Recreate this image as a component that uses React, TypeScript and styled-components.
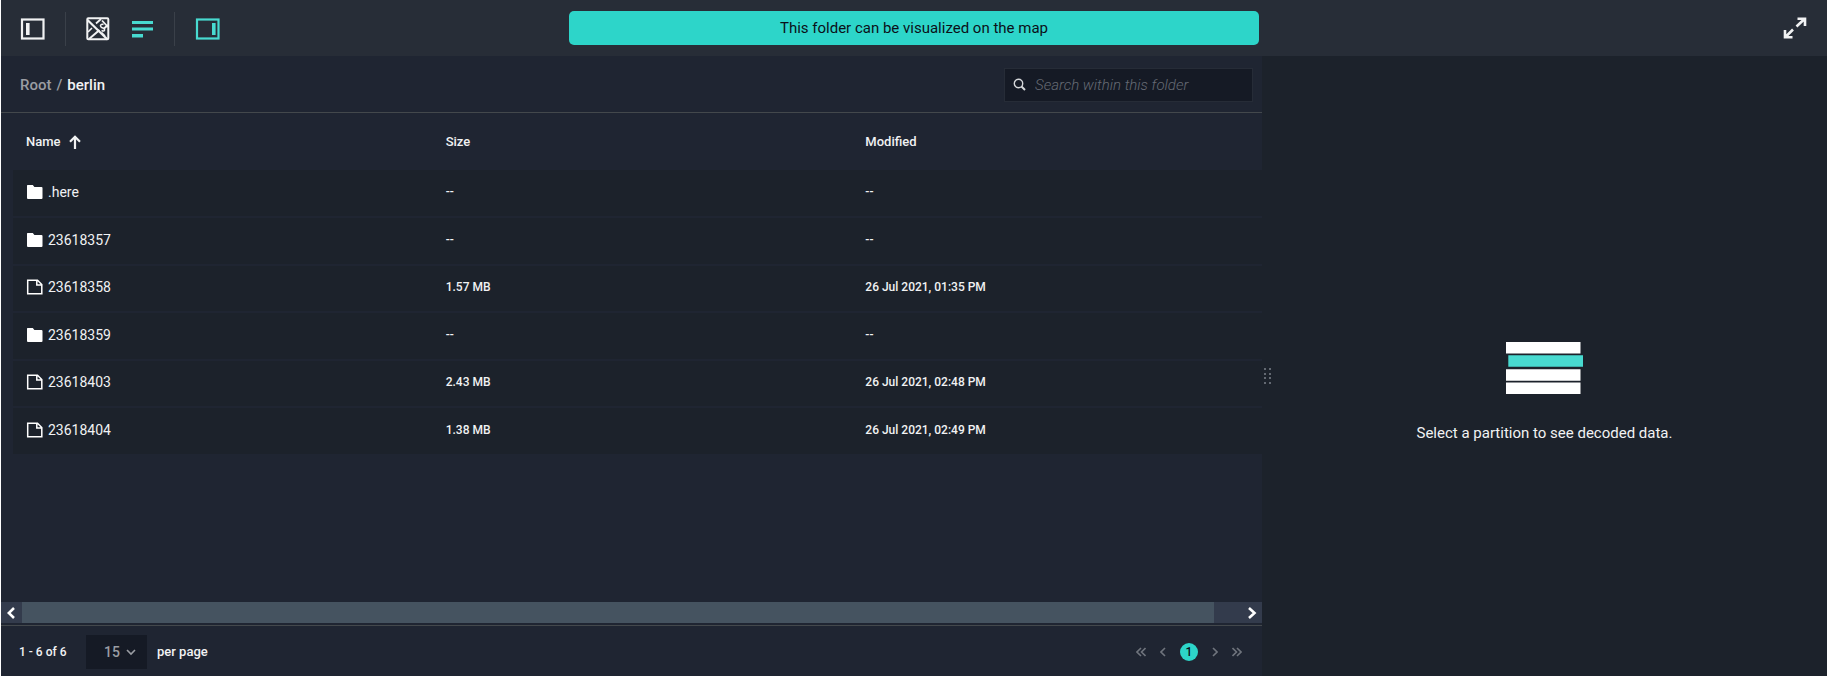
import React, { useState } from 'react';
import styled, { createGlobalStyle } from 'styled-components';

const color = {
  bar: '#272d37',
  panel: '#1f2532',
  surface: '#1c222b',
  field: '#151a25',
  line: '#43484c',
  track: '#333b4c',
  thumb: '#455360',
  accent: '#2dd5c9',
  accentIcon: '#48dad0',
  text: '#f1f2f3',
  muted: '#9a9da3',
  faint: '#6f747d',
};

const GlobalStyle = createGlobalStyle`
  * { box-sizing: border-box; }
  body {
    margin: 0;
    background: ${color.surface};
    color: ${color.text};
    font-family: Roboto, "Noto Sans", sans-serif;
    font-size: 14px;
    line-height: 20px;
  }
  button, input, select { font: inherit; color: inherit; }
`;

const Page = styled.div`
  display: flex;
  flex-direction: column;
  min-height: 100vh;
  border-left: 1px solid #fff;
`;

const Toolbar = styled.header`
  display: grid;
  grid-template-columns: minmax(0, 1fr) 565px;
  align-items: center;
  height: 56px;
  background: ${color.bar};
`;

const ToolbarMain = styled.div`
  display: flex;
  align-items: center;
  justify-content: space-between;
  padding: 0 3px 0 19px;
`;

const ToolbarSide = styled.div`
  display: flex;
  justify-content: flex-end;
  padding-right: 20px;
`;

const Tools = styled.div`
  display: flex;
  align-items: center;
  gap: 20px;
  padding-top: 1px;
`;

const IconButton = styled.button<{ $active?: boolean }>`
  display: flex;
  padding: 0;
  border: 0;
  background: none;
  cursor: pointer;
  color: ${(p) => (p.$active ? color.accentIcon : color.text)};
`;

const Divider = styled.span`
  width: 1px;
  height: 34px;
  background: #3a4049;
`;

const Banner = styled.button`
  width: 690px;
  height: 34px;
  border: 0;
  border-radius: 5px;
  background: ${color.accent};
  color: #0b1018;
  font-size: 15px;
  cursor: pointer;
`;

const Main = styled.main`
  flex: 1;
  display: grid;
  grid-template-columns: minmax(0, 1fr) 565px;
`;

const Browser = styled.section`
  display: flex;
  flex-direction: column;
  background: ${color.panel};
`;

const PathBar = styled.div`
  display: flex;
  align-items: center;
  justify-content: space-between;
  height: 57px;
  padding: 1px 9px 0 19px;
  border-bottom: 1px solid ${color.line};
`;

const Breadcrumb = styled.nav`
  display: flex;
  gap: 5px;
  font-size: 15px;
  font-weight: 500;
  color: ${color.muted};
`;

const Crumb = styled.a<{ $current?: boolean }>`
  color: ${(p) => (p.$current ? color.text : color.muted)};
  text-decoration: none;
`;

const SearchField = styled.label`
  display: flex;
  align-items: center;
  gap: 9px;
  width: 249px;
  height: 34px;
  padding: 0 8px;
  border: 1px solid #262c37;
  background: ${color.field};
`;

const SearchInput = styled.input`
  flex: 1;
  min-width: 0;
  padding: 0;
  border: 0;
  outline: 0;
  background: none;
  font-size: 15px;
  &::placeholder {
    color: #656a74;
    font-style: italic;
    font-weight: 300;
    opacity: 1;
  }
`;

const Listing = styled.div`
  flex: 1;
  padding-left: 12px;
`;

const Table = styled.table`
  width: 100%;
  table-layout: fixed;
  border-collapse: collapse;
`;

const HeadCell = styled.th`
  height: 57px;
  padding: 1px 0 0 13px;
  text-align: left;
  font-size: 13px;
  font-weight: 500;
  &:not(:last-child) { width: 33.6%; }
`;

const SortButton = styled.button`
  display: inline-flex;
  align-items: center;
  gap: 8px;
  padding: 0;
  border: 0;
  background: none;
  cursor: pointer;
`;

const Row = styled.tr`
  height: 47px;
  background: ${color.surface};
  border-bottom: 2px solid ${color.panel};
  &:nth-child(even) { height: 48px; }
`;

const Cell = styled.td`
  padding: 0 0 3px 13px;
  font-size: 12px;
  font-weight: 500;
`;

const FileLink = styled.a`
  display: flex;
  align-items: center;
  gap: 5px;
  color: inherit;
  text-decoration: none;
  font-size: 14px;
  font-weight: 400;
`;

const ScrollBar = styled.div`
  display: flex;
  height: 21px;
  margin-bottom: 2px;
  background: ${color.track};
`;

const ScrollTrack = styled.div`
  flex: 1;
`;

const ScrollThumb = styled.div`
  width: 97.8%;
  height: 21px;
  background: ${color.thumb};
`;

const ScrollButton = styled.button`
  display: flex;
  align-items: center;
  justify-content: center;
  width: 21px;
  padding: 0;
  border: 0;
  background: ${color.track};
  color: #fff;
`;

const Footer = styled.footer`
  display: flex;
  align-items: center;
  justify-content: space-between;
  height: 51px;
  padding: 2px 20px 0 18px;
  border-top: 1px solid ${color.line};
  font-size: 13px;
  font-weight: 500;
`;

const PageSize = styled.div`
  display: flex;
  align-items: center;
`;

const PageCount = styled.span`
  width: 67px;
  font-size: 12px;
`;

const PageSizeLabel = styled.label`
  margin-left: 10px;
`;

const SelectBox = styled.div`
  display: grid;
  align-items: center;
  width: 61px;
  height: 34px;
  background: ${color.field};
  color: ${color.muted};
  > * { grid-area: 1 / 1; }
  > svg { justify-self: end; margin-right: 11px; pointer-events: none; }
`;

const Select = styled.select`
  width: 100%;
  height: 34px;
  padding: 0 0 0 18px;
  border: 0;
  border-radius: 0;
  appearance: none;
  background: none;
  font-size: 14px;
`;

const Pager = styled.nav`
  display: flex;
  align-items: center;
  gap: 14px;
`;

const PagerButton = styled.button`
  display: flex;
  padding: 0;
  border: 0;
  background: none;
  color: ${color.faint};
`;

const CurrentPage = styled.button`
  width: 18px;
  height: 18px;
  padding: 0;
  border: 0;
  border-radius: 50%;
  background: ${color.accent};
  color: #0b1018;
  font-size: 12px;
  line-height: 18px;
`;

const Preview = styled.aside`
  display: flex;
  align-items: center;
  background: ${color.surface};
`;

const Handle = styled.div`
  display: flex;
  width: 12px;
  padding: 20px 0 0 2px;
  cursor: col-resize;
`;

const EmptyState = styled.div`
  flex: 1;
  display: flex;
  flex-direction: column;
  align-items: center;
  gap: 29px;
  padding: 53px 12px 0 0;
  font-size: 15px;
`;

type Kind = 'folder' | 'file';
interface Entry { name: string; kind: Kind; size: string; modified: string }

const entries: Entry[] = [
  { name: '.here', kind: 'folder', size: '--', modified: '--' },
  { name: '23618357', kind: 'folder', size: '--', modified: '--' },
  { name: '23618358', kind: 'file', size: '1.57 MB', modified: '26 Jul 2021, 01:35 PM' },
  { name: '23618359', kind: 'folder', size: '--', modified: '--' },
  { name: '23618403', kind: 'file', size: '2.43 MB', modified: '26 Jul 2021, 02:48 PM' },
  { name: '23618404', kind: 'file', size: '1.38 MB', modified: '26 Jul 2021, 02:49 PM' },
];

const PanelIcon = ({ side }: { side: 'left' | 'right' }) => (
  <svg width="25" height="22" viewBox="0 0 25 22" fill="none" aria-hidden="true">
    <rect x="2" y="1.5" width="21.5" height="19" stroke="currentColor" strokeWidth="2.2" />
    <rect x={side === 'left' ? 6 : 17} y="5" width="3.6" height="12" fill="currentColor" />
  </svg>
);

const MapIcon = () => (
  <svg width="24" height="24" viewBox="0 0 24 24" fill="none" stroke="currentColor" aria-hidden="true">
    <rect x="1.3" y="1.3" width="21" height="21" rx="1" strokeWidth="2" />
    <path d="M1.5 3 21.5 22.5" strokeWidth="2.2" />
    <path d="M3 22 13.5 13M18 11.5 22 8" strokeWidth="2" />
    <path d="M2 15 6 11M15.5 15.5 19 19" strokeWidth="1.6" />
    <path d="M10 6.5 15 2M16 3.5 22 10" strokeWidth="1.8" />
    <path d="M17.5 7.5C15.5 6.500 13.5 8.500 15 10S18 10.500 18.5 12.5 16.5 14 15.5 13.5" strokeWidth="1.5" />
  </svg>
);

const ListIcon = () => (
  <svg width="24" height="20" viewBox="0 0 24 20" fill="currentColor" aria-hidden="true">
    <path d="M2 2h21v3H2zM2 8.5h21v3H2zM2 15h11v3.5H2z" />
  </svg>
);

const ExpandIcon = () => (
  <svg width="24" height="22" viewBox="0 0 24 22" fill="none" stroke="currentColor" strokeWidth="2.6" aria-hidden="true">
    <path d="M14.5 1.8H22V9M21.5 2 13.5 9.5M9.5 20.2H2V13M2.5 20 10 12.5" />
  </svg>
);

const SearchIcon = () => (
  <svg width="13" height="13" viewBox="0 0 13 13" fill="none" stroke="#d5d7da" aria-hidden="true">
    <circle cx="5.5" cy="5.5" r="4.2" strokeWidth="1.4" />
    <path d="M8.5 8.5 12 12" strokeWidth="2" />
  </svg>
);

const SortIcon = () => (
  <svg width="12" height="14" viewBox="0 0 12 14" fill="none" stroke="currentColor" strokeWidth="2.2" aria-hidden="true">
    <path d="M6 14V1.8M1 6.8 6 1.8l5 5" />
  </svg>
);

const EntryIcon = ({ kind }: { kind: Kind }) => (
  <svg width="17" height="16" viewBox="0 0 17 16" aria-hidden="true">
    {kind === 'folder' ? (
      <path d="M1.5 1h5.3l1.6 2H15.5a1 1 0 0 1 1 1v10a1 1 0 0 1-1 1h-13.5a1 1 0 0 1-1-1V1.5z" fill="#fff" />
    ) : (
      <path d="M1.7 1.2H11.5L15.8 5.5V14.8H1.7zM10.8 1.5V6H15.5" fill="none" stroke="#fff" strokeWidth="1.5" />
    )}
  </svg>
);

const Chevron = ({ d, width, size = 10, stroke = 1.6 }: { d: string; width: number; size?: number; stroke?: number }) => (
  <svg width={width} height={size} viewBox={`0 0 ${width} ${size}`} fill="none" stroke="currentColor" strokeWidth={stroke} aria-hidden="true">
    <path d={d} />
  </svg>
);

const HandleDots = () => (
  <svg width="8" height="17" viewBox="0 0 8 17" fill="#636972" aria-hidden="true">
    {[0, 5, 9, 14].map((y) => (
      <path key={y} d={`M0 ${y}h2v2h-2zM5 ${y}h2v2h-2z`} />
    ))}
  </svg>
);

const PartitionArt = () => (
  <svg width="77" height="52" viewBox="0 0 77 52" fill="#fff" aria-hidden="true">
    <path d="M0 0h74.5v11.5H0zM0 27.2h74.5v11.5H0zM0 40.5h74.5v11.5H0z" />
    <path d="M2.3 13.3H77v11.5H2.3z" fill={color.accentIcon} />
  </svg>
);

export default function App() {
  const [query, setQuery] = useState('');
  const [pageSize, setPageSize] = useState('15');
  return (
    <Page>
      <GlobalStyle />
      <Toolbar>
        <ToolbarMain>
          <Tools>
            <IconButton aria-label="Toggle left panel"><PanelIcon side="left" /></IconButton>
            <Divider />
            <IconButton aria-label="Map view"><MapIcon /></IconButton>
            <IconButton aria-label="List view" $active><ListIcon /></IconButton>
            <Divider />
            <IconButton aria-label="Toggle right panel" $active><PanelIcon side="right" /></IconButton>
          </Tools>
          <Banner>This folder can be visualized on the map</Banner>
        </ToolbarMain>
        <ToolbarSide>
          <IconButton aria-label="Full screen"><ExpandIcon /></IconButton>
        </ToolbarSide>
      </Toolbar>
      <Main>
        <Browser>
          <PathBar>
            <Breadcrumb aria-label="Breadcrumb">
              <Crumb href="#root">Root</Crumb>
              <span>/</span>
              <Crumb href="#berlin" $current>berlin</Crumb>
            </Breadcrumb>
            <SearchField>
              <SearchIcon />
              <SearchInput
                aria-label="Search within this folder"
                placeholder="Search within this folder"
                value={query}
                onChange={(e) => setQuery(e.target.value)}
              />
            </SearchField>
          </PathBar>
          <Listing>
            <Table>
              <thead>
                <tr>
                  <HeadCell><SortButton>Name <SortIcon /></SortButton></HeadCell>
                  <HeadCell>Size</HeadCell>
                  <HeadCell>Modified</HeadCell>
                </tr>
              </thead>
              <tbody>
                {entries.map((entry) => (
                  <Row key={entry.name}>
                    <Cell><FileLink href={`#${entry.name}`}><EntryIcon kind={entry.kind} />{entry.name}</FileLink></Cell>
                    <Cell>{entry.size}</Cell>
                    <Cell>{entry.modified}</Cell>
                  </Row>
                ))}
              </tbody>
            </Table>
          </Listing>
          <ScrollBar>
            <ScrollButton aria-label="Scroll left"><Chevron d="M7 1 1.8 6 7 11" width={10} size={12} stroke={2.6} /></ScrollButton>
            <ScrollTrack><ScrollThumb /></ScrollTrack>
            <ScrollButton aria-label="Scroll right"><Chevron d="M2 1 7.5 6 2 11" width={10} size={12} stroke={2.6} /></ScrollButton>
          </ScrollBar>
          <Footer>
            <PageSize>
              <PageCount>1 - 6 of 6</PageCount>
              <SelectBox>
                <Select id="page-size" value={pageSize} onChange={(e) => setPageSize(e.target.value)}>
                  <option>15</option>
                  <option>30</option>
                  <option>50</option>
                </Select>
                <Chevron d="M1 3 5 7 9 3" width={10} />
              </SelectBox>
              <PageSizeLabel htmlFor="page-size">per page</PageSizeLabel>
            </PageSize>
            <Pager aria-label="Pages">
              <PagerButton aria-label="First page"><Chevron d="M5 1 1 5 5 9M9.5 1 5.5 5 9.5 9" width={10} /></PagerButton>
              <PagerButton aria-label="Previous page"><Chevron d="M5 1 1 5 5 9" width={6} /></PagerButton>
              <CurrentPage aria-current="page">1</CurrentPage>
              <PagerButton aria-label="Next page"><Chevron d="M1 1 5 5 1 9" width={6} /></PagerButton>
              <PagerButton aria-label="Last page"><Chevron d="M.5 1 4.5 5 .5 9M5 1 9 5 5 9" width={10} /></PagerButton>
            </Pager>
          </Footer>
        </Browser>
        <Preview>
          <Handle role="separator" aria-label="Resize panel"><HandleDots /></Handle>
          <EmptyState>
            <PartitionArt />
            <span>Select a partition to see decoded data.</span>
          </EmptyState>
        </Preview>
      </Main>
    </Page>
  );
}
